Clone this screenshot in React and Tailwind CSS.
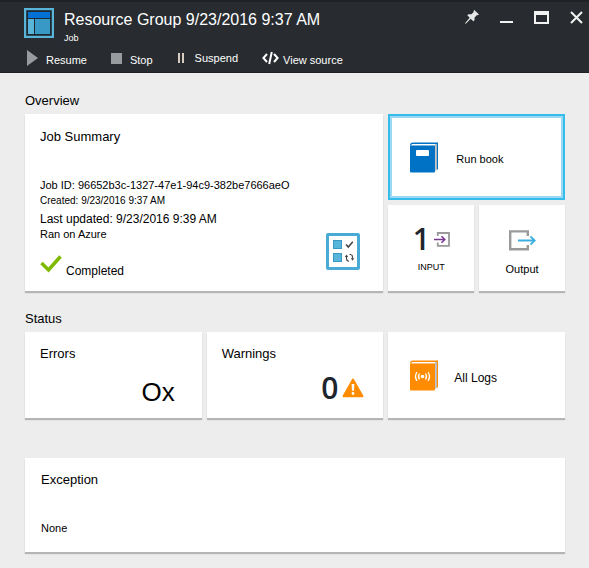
import React from "react";

function TemplateIcon() {
  return (
    <svg width="30" height="30" viewBox="0 0 30 30" aria-hidden="true">
      <rect x="1" y="1" width="28" height="28" fill="#1d2830" stroke="#59b4d9" strokeWidth="2.4" />
      <rect x="4" y="4" width="22" height="6" fill="#0072d6" />
      <rect x="4" y="11" width="6" height="15" fill="#59b4d9" />
      <rect x="11" y="11" width="15" height="15" fill="#3999c6" />
    </svg>
  );
}

function PinIcon() {
  return (
    <svg width="14" height="14" viewBox="0 0 14 14" aria-hidden="true">
      <path d="M9.3 0 L14 4.5 L12.9 5.3 L12 5 L9.6 7.4 L9.5 10.2 L8.3 11.2 L5.7 8.7 L0.8 13.8 L0 13.2 L4.7 7.7 L2.3 5.3 L3.4 4.2 L6.4 4.2 L8.8 1.9 L8.5 0.9 Z" fill="#e8e8e8" />
    </svg>
  );
}

function MinimizeIcon() {
  return (
    <svg width="13" height="14" viewBox="0 0 13 14" aria-hidden="true">
      <rect x="0" y="11" width="13" height="2" fill="#f2f2f2" />
    </svg>
  );
}

function MaximizeIcon() {
  return (
    <svg width="15" height="14" viewBox="0 0 15 14" aria-hidden="true">
      <path d="M0 1 H15 V14 H0 Z M2 5 V12 H13 V5 Z" fill="#f2f2f2" fillRule="evenodd" />
    </svg>
  );
}

function CloseIcon() {
  return (
    <svg width="13" height="14" viewBox="0 0 13 14" aria-hidden="true">
      <path d="M1 2 L12 13 M12 2 L1 13" stroke="#f2f2f2" strokeWidth="2" />
    </svg>
  );
}

function CodeIcon() {
  return (
    <svg width="17" height="14" viewBox="0 0 17 14" aria-hidden="true">
      <path d="M5 3 L1.4 7 L5 11 M12 3 L15.6 7 L12 11 M9.8 1 L7.2 13" fill="none" stroke="#fff" strokeWidth="2" />
    </svg>
  );
}

function ChecklistIcon() {
  return (
    <svg width="34" height="37" viewBox="0 0 34 37" aria-hidden="true">
      <rect x="1.5" y="1.5" width="31" height="34" rx="0.5" fill="#fff" stroke="#4aaad6" strokeWidth="3" />
      <rect x="7.5" y="7.5" width="8" height="8" fill="#59b4d9" stroke="#3999c6" />
      <rect x="7.5" y="20.5" width="8" height="8" fill="#59b4d9" stroke="#3999c6" />
      <path d="M20 11.5 L22.3 14 L26.8 8.8" fill="none" stroke="#444" strokeWidth="1.5" />
      <path d="M23.5 21.5 H24.5 Q26.5 21.8 26.5 24 V25.5 M23 28 H22.2 Q20.5 27.6 20.5 25.5 V23.5" fill="none" stroke="#444" strokeWidth="1.2" />
      <path d="M18.8 24 L20.5 21.5 L22.2 24 Z M24.8 25.3 L26.5 27.8 L28.2 25.3 Z" fill="#444" />
    </svg>
  );
}

function Book({ color, page, children }) {
  return (
    <svg width="28" height="31" viewBox="0 0 28 31" aria-hidden="true">
      <path d="M0 3.5 Q0 0.5 3 0.5 H28 V27.5 H25 V3 H2 Z" fill={color} />
      <path d="M1.8 3.5 V2 H26.8 V27.5 L25 29.5 V3.5 Z" fill={page} />
      <path d="M1.8 3.5 V2 H25 V3.5 Z" fill="#fff" />
      <path d="M0 3.5 H25 V29.5 Q25 30.5 24 30.5 H1 Q0 30.5 0 29.5 Z" fill={color} />
      {children}
    </svg>
  );
}

function InputIcon() {
  return (
    <svg width="16" height="15" viewBox="0 0 16 15" aria-hidden="true">
      <path d="M3.75 4 V1 H15 V13.8 H3.75 V10.5" fill="none" stroke="#999" strokeWidth="1.8" />
      <path d="M0 7.5 H10.5 M7.5 4.2 L10.8 7.5 L7.5 10.8" fill="none" stroke="#7a3a94" strokeWidth="1.6" />
    </svg>
  );
}

function OutputIcon() {
  return (
    <svg width="27" height="21" viewBox="0 0 27 21" aria-hidden="true">
      <path d="M18.8 6 V1.4 H1.2 V19.3 H18.8 V15" fill="none" stroke="#999" strokeWidth="2.4" />
      <path d="M9 10.5 H25.5 M21.5 6.3 L25.7 10.5 L21.5 14.7" fill="none" stroke="#3daee0" strokeWidth="1.8" />
    </svg>
  );
}

function WarningIcon() {
  return (
    <svg width="22" height="20" viewBox="0 0 22 20" aria-hidden="true">
      <path d="M11 1.5 L20.5 18.3 H1.5 Z" fill="#ff8c00" stroke="#ff8c00" strokeWidth="2" strokeLinejoin="round" />
      <path d="M9.6 6 H12.4 L12 12.8 H10 Z" fill="#fff" />
      <circle cx="11" cy="15.5" r="1.4" fill="#fff" />
    </svg>
  );
}

const card = "bg-white shadow-[0_2px_1px_#b5b5b5]";

export default function App() {
  return (
    <div className="min-h-screen bg-[#ededed] font-['Liberation_Sans',Arial,sans-serif] text-black">
      <header className="border-t-2 border-b border-[#1e2226] bg-[#282c30] pb-1 text-white">
        <div className="flex items-start justify-between pt-1.5 pr-1.5 pl-6">
          <div className="flex gap-2.5">
            <TemplateIcon />
            <div className="pt-1">
              <h1 className="text-[16px] leading-4">Resource Group 9/23/2016 9:37 AM</h1>
              <p className="pt-1 text-[9px] leading-3">Job</p>
            </div>
          </div>
          <div className="flex items-start gap-[21px] pt-0.5">
            <button aria-label="Pin"><PinIcon /></button>
            <button aria-label="Minimize"><MinimizeIcon /></button>
            <button aria-label="Maximize"><MaximizeIcon /></button>
            <button aria-label="Close"><CloseIcon /></button>
          </div>
        </div>
        <nav className="flex items-center pt-1 pl-[27px] text-[11px] leading-4">
          <button className="flex items-center gap-2">
            <svg width="11" height="16" viewBox="0 0 11 16" aria-hidden="true"><path d="M0 0 L11 8 L0 16 Z" fill="#999c9e" /></svg>
            <span className="pt-1">Resume</span>
          </button>
          <button className="ml-6 flex items-center gap-2">
            <svg width="11" height="11" viewBox="0 0 11 11" aria-hidden="true"><rect width="11" height="11" fill="#999c9e" /></svg>
            <span className="pt-1">Stop</span>
          </button>
          <button className="ml-6 flex items-center gap-2.5">
            <svg width="8" height="10" viewBox="0 0 8 10" aria-hidden="true"><path d="M1 0 H3 V10 H1 Z M5 0 H7 V10 H5 Z" fill="#d8ccc0" /></svg>
            <span>Suspend</span>
          </button>
          <button className="ml-6 flex items-center gap-1">
            <CodeIcon />
            <span className="pt-1">View source</span>
          </button>
        </nav>
      </header>

      <main className="pt-5 pr-6 pb-3 pl-[25px]">
        <section>
          <h2 className="text-[13px] leading-4">Overview</h2>
          <div className="mt-[5px] grid grid-cols-6 grid-rows-[86px_86px] gap-[5px]">
            <article className={`${card} col-span-4 row-span-2 flex flex-col px-[15px] pt-[15px] pb-3`}>
              <h3 className="text-[13px] leading-4">Job Summary</h3>
              <div className="pt-8">
                <p className="text-[11px] leading-4">Job ID: 96652b3c-1327-47e1-94c9-382be7666aeO</p>
                <p className="text-[10px] leading-4">Created: 9/23/2016 9:37 AM</p>
              </div>
              <div className="flex justify-between pt-0.5 pr-2">
                <div>
                  <p className="text-[12px] leading-4">Last updated: 9/23/2016 9:39 AM</p>
                  <p className="text-[11px] leading-[14px]">Ran on Azure</p>
                  <p className="flex items-end gap-1 pt-3.5 text-[12px] leading-4">
                    <svg width="22" height="24" viewBox="0 0 22 24" aria-hidden="true"><path d="M1.5 8 L8.5 15 L20.5 1.5" fill="none" stroke="#7fba00" strokeWidth="3.5" /></svg>
                    Completed
                  </p>
                </div>
                <div className="pt-[22px]"><ChecklistIcon /></div>
              </div>
            </article>
            <button className="col-span-2 flex items-center gap-[18px] border-2 border-[#35bce9] bg-white pl-5 text-[11px] shadow-[inset_0_0_0_2px_#9bd8f4]">
              <Book color="#0072c6" page="#c9c5c0"><rect x="6" y="8" width="13" height="6" rx="1" fill="#fff" /></Book>
              <span className="pt-1">Run book</span>
            </button>
            <button className={`${card} flex flex-col items-center pt-[18px]`}>
              <span className="flex items-center gap-1">
                <span className="font-['Open_Sans',sans-serif] text-[30px] leading-8 font-semibold text-[#1e252d]">1</span>
                <InputIcon />
              </span>
              <span className="pt-1 text-[9px] leading-4">INPUT</span>
            </button>
            <button className={`${card} flex flex-col items-center pt-[25px]`}>
              <OutputIcon />
              <span className="pt-2.5 text-[11px] leading-4">Output</span>
            </button>
          </div>
        </section>

        <section className="pt-5">
          <h2 className="text-[13px] leading-4">Status</h2>
          <div className="mt-[5px] grid grid-cols-3 grid-rows-[86px] gap-[5px]">
            <article className={`${card} flex flex-col px-[15px] pt-3.5`}>
              <h3 className="text-[13px] leading-4">Errors</h3>
              <p className="pt-3.5 pr-3 text-right text-[26px] leading-8">Ox</p>
            </article>
            <article className={`${card} flex flex-col px-[15px] pt-3.5`}>
              <h3 className="text-[13px] leading-4">Warnings</h3>
              <p className="flex items-center justify-end gap-1 pt-2.5 pr-1 font-['Open_Sans',sans-serif] text-[30px] leading-8 font-semibold text-[#1e252d]">
                0 <WarningIcon />
              </p>
            </article>
            <button className={`${card} flex items-center gap-4 pl-[22px] text-[12px]`}>
              <Book color="#ff8c00" page="#b9c4d2">
                <circle cx="12.5" cy="16.5" r="1.8" fill="#fff" />
                <path d="M9.5 13.5 Q7.5 16.5 9.5 19.5 M15.5 13.5 Q17.5 16.5 15.5 19.5 M7 12 Q4 16.5 7 21 M18 12 Q21 16.5 18 21" fill="none" stroke="#fff" strokeWidth="1.3" />
              </Book>
              <span className="pt-1.5">All Logs</span>
            </button>
          </div>
        </section>

        <section className={`${card} mt-10 px-4 pt-3.5 pb-4`}>
          <h2 className="text-[13px] leading-4">Exception</h2>
          <p className="pt-8 text-[11px] leading-4">None</p>
        </section>
      </main>
    </div>
  );
}
